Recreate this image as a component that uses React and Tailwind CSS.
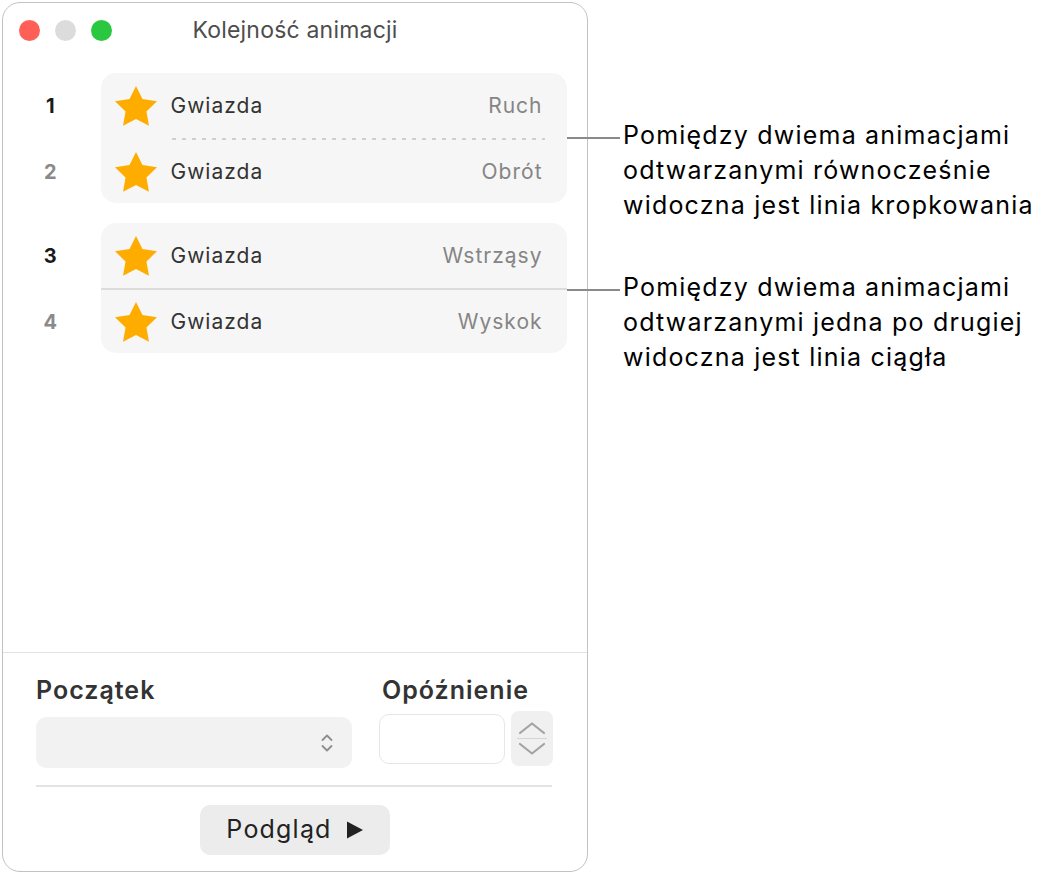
import React from "react";

const font = { fontFamily: "Inter, 'Noto Sans', sans-serif" };

function Star() {
  return (
    <svg width="42" height="40" viewBox="2 2 20 19.1" className="shrink-0">
      <polygon
        points="12,2 15.09,8.26 22,9.27 17,14.14 18.18,21.02 12,17.77 5.82,21.02 7,14.14 2,9.27 8.91,8.26"
        fill="#FFAC00"
      />
    </svg>
  );
}

function Row({ effect, h }) {
  return (
    <div className={`flex items-center pl-[14px] pr-[24px] ${h}`}>
      <Star />
      <span className="ml-[14px] text-[21px] tracking-[1px] text-[#333]">Gwiazda</span>
      <span className="ml-auto text-[21px] tracking-[1px] text-[#858585]">{effect}</span>
    </div>
  );
}

function Group({ a, b, dashed }) {
  return (
    <div className="flex">
      {/* order numbers */}
      <div className="flex w-[97.5px] flex-col pr-[3px] text-[20px] font-bold">
        <div className="flex h-[65px] items-center justify-center text-[#1a1a1a]">{a.num}</div>
        <div className="h-[2px]" />
        <div className="flex h-[63px] items-center justify-center text-[#8a8a8a]">{b.num}</div>
      </div>
      {/* card */}
      <div className="w-[466px] rounded-[15px] bg-[#f6f6f6]">
        <Row effect={a.effect} h="h-[65px]" />
        {dashed ? (
          <div className="pl-[71px] pr-[22px]">
            <div className="h-[2px] bg-[linear-gradient(to_right,#cfcfcf_4px,transparent_4px)] bg-[length:10px_2px]" />
          </div>
        ) : (
          <div className="h-[2px] bg-[#dcdcdc]" />
        )}
        <Row effect={b.effect} h="h-[63px]" />
      </div>
    </div>
  );
}

function Note({ lines, mt }) {
  return (
    <div className={`flex items-start ${mt}`}>
      <div className="ml-[-21px] mt-[19px] h-[2px] w-[53px] shrink-0 bg-[#8a8a8a]" />
      <div className="ml-[3px] text-[25px] leading-[35px] tracking-[1.2px] text-black">
        {lines.map((l) => (
          <div key={l} className="whitespace-nowrap">
            {l}
          </div>
        ))}
      </div>
    </div>
  );
}

export default function App() {
  return (
    <div className="flex h-[878px] w-[1045px] items-start bg-white pl-[2px] pt-[2px]" style={font}>
      <div className="relative z-0 flex h-[870px] w-[586px] shrink-0 flex-col rounded-[18px] border-[1.5px] border-[#c2c2c2] bg-white">
        {/* title bar */}
        <div className="grid h-[54px] grid-cols-[1fr_auto_1fr] items-center">
          <div className="flex items-center gap-[15px] pl-[16px]">
            <span className="h-[21px] w-[21px] rounded-full bg-[#ff5f57]" />
            <span className="h-[21px] w-[21px] rounded-full bg-[#dcdcdc]" />
            <span className="h-[21px] w-[21px] rounded-full bg-[#2ac840]" />
          </div>
          <div className="text-[23px] tracking-[0.2px] text-[#4d4d4d]">Kolejność animacji</div>
          <div />
        </div>

        {/* animation list */}
        <div className="flex flex-1 flex-col gap-[20px] pt-[16px]">
          <Group a={{ num: 1, effect: "Ruch" }} b={{ num: 2, effect: "Obrót" }} dashed />
          <Group a={{ num: 3, effect: "Wstrząsy" }} b={{ num: 4, effect: "Wyskok" }} />
        </div>

        {/* settings footer */}
        <div className="h-[219px] border-t-[1.5px] border-[#e3e3e3] px-[33px]">
          <div className="flex pt-[22px]">
            <div className="w-[316px]">
              <div className="text-[25px] font-semibold leading-[30px] tracking-[1px] text-[#333]">Początek</div>
              <div className="mt-[12px] flex h-[51px] items-center justify-end rounded-[10px] bg-[#f2f2f2] pr-[18px]">
                <svg width="14" height="22" viewBox="0 0 14 22" fill="none" stroke="#8e8e8e" strokeWidth="1.8" strokeLinecap="round" strokeLinejoin="round">
                  <path d="M2.5 8 L7 3.5 L11.5 8" />
                  <path d="M2.5 14 L7 18.5 L11.5 14" />
                </svg>
              </div>
            </div>
            <div className="ml-[27px]">
              <div className="pl-[3px] text-[25px] font-semibold leading-[30px] tracking-[1px] text-[#333]">Opóźnienie</div>
              <div className="mt-[6px] flex items-center gap-[6px]">
                <div className="h-[50px] w-[126px] rounded-[10px] border-[1.5px] border-[#e6e6e6] bg-white" />
                <div className="flex h-[55px] w-[42px] flex-col items-center justify-center rounded-[8px] bg-[#f0f0f0]">
                  <svg width="30" height="14" viewBox="0 0 30 14" fill="none" stroke="#a3a3a3" strokeWidth="2.2" strokeLinecap="round" strokeLinejoin="round">
                    <path d="M3 12 L15 2.5 L27 12" />
                  </svg>
                  <div className="my-[3px] h-[1.5px] w-[30px] bg-[#d4d4d4]" />
                  <svg width="30" height="14" viewBox="0 0 30 14" fill="none" stroke="#a3a3a3" strokeWidth="2.2" strokeLinecap="round" strokeLinejoin="round">
                    <path d="M3 2 L15 11.5 L27 2" />
                  </svg>
                </div>
              </div>
            </div>
          </div>
          <div className="mt-[17px] h-[1.5px] w-[516px] bg-[#e3e3e3]" />
          <div className="flex justify-center pt-[18px]">
            <div className="flex h-[50px] w-[190px] items-center justify-center gap-[14px] rounded-[10px] bg-[#ececec]">
              <span className="text-[25px] tracking-[1.2px] text-[#222]">Podgląd</span>
              <svg width="18" height="20" viewBox="0 0 18 20">
                <polygon points="1,1.5 17,10 1,18.5" fill="#222" />
              </svg>
            </div>
          </div>
        </div>
      </div>

      {/* callouts */}
      <div className="relative z-10 flex flex-col">
        <Note
          mt="mt-[116px]"
          lines={["Pomiędzy dwiema animacjami", "odtwarzanymi równocześnie", "widoczna jest linia kropkowania"]}
        />
        <Note
          mt="mt-[47px]"
          lines={["Pomiędzy dwiema animacjami", "odtwarzanymi jedna po drugiej", "widoczna jest linia ciągła"]}
        />
      </div>
    </div>
  );
}
